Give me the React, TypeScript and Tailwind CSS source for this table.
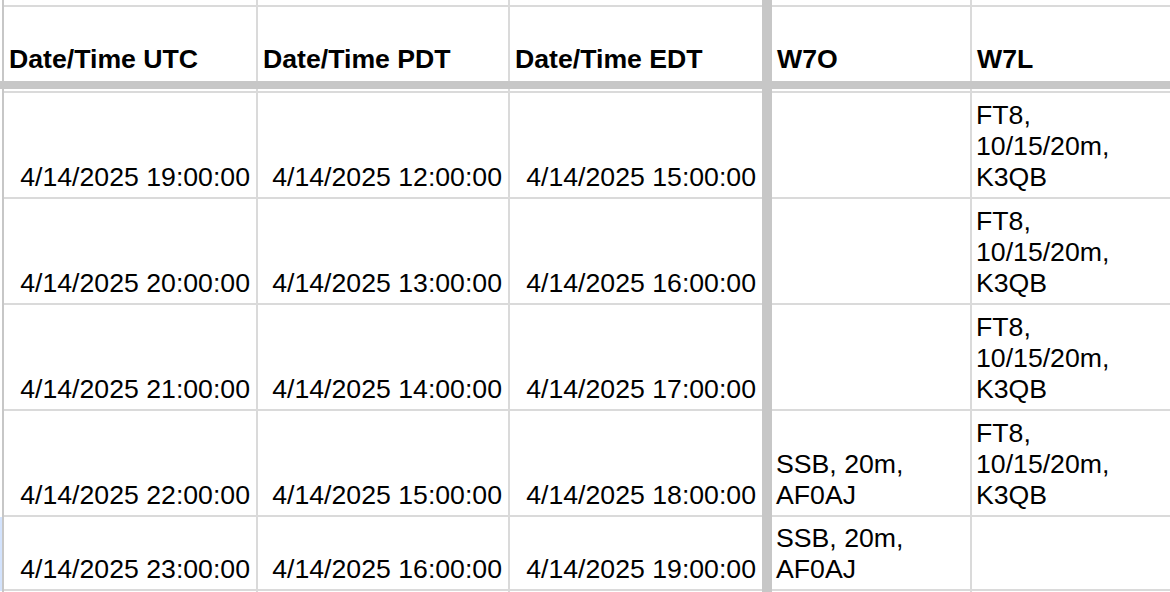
import React from "react";

type Row = {
  utc: string;
  pdt: string;
  edt: string;
  w7o: string[];
  w7l: string[];
};

const rows: Row[] = [
  { utc: "4/14/2025 19:00:00", pdt: "4/14/2025 12:00:00", edt: "4/14/2025 15:00:00", w7o: [], w7l: ["FT8,", "10/15/20m,", "K3QB"] },
  { utc: "4/14/2025 20:00:00", pdt: "4/14/2025 13:00:00", edt: "4/14/2025 16:00:00", w7o: [], w7l: ["FT8,", "10/15/20m,", "K3QB"] },
  { utc: "4/14/2025 21:00:00", pdt: "4/14/2025 14:00:00", edt: "4/14/2025 17:00:00", w7o: [], w7l: ["FT8,", "10/15/20m,", "K3QB"] },
  { utc: "4/14/2025 22:00:00", pdt: "4/14/2025 15:00:00", edt: "4/14/2025 18:00:00", w7o: ["SSB, 20m,", "AF0AJ"], w7l: ["FT8,", "10/15/20m,", "K3QB"] },
  { utc: "4/14/2025 23:00:00", pdt: "4/14/2025 16:00:00", edt: "4/14/2025 19:00:00", w7o: ["SSB, 20m,", "AF0AJ"], w7l: [] },
];

const line = "border-[#dadada]";

// one spreadsheet row: gutter, left rule, five cells, freeze bar after the third
function SheetRow({
  height,
  bottom = true,
  selected = false,
  cells,
}: {
  height: string;
  bottom?: boolean;
  selected?: boolean;
  cells?: React.ReactNode[];
}) {
  const b = bottom ? `border-b-2 ${line}` : "";
  const c = cells ?? [null, null, null, null, null];
  return (
    <div className={`flex shrink-0 ${height}`}>
      <div className={`w-[2px] shrink-0 ${selected ? "bg-[#d3e3fd]" : "bg-white"}`} />
      <div className="w-[2px] shrink-0 bg-[#c7c7c7]" />
      <div className={`w-[254px] shrink-0 border-r-2 ${line} ${b}`}>{c[0]}</div>
      <div className={`w-[252px] shrink-0 border-r-2 ${line} ${b}`}>{c[1]}</div>
      <div className={`w-[252px] shrink-0 ${b}`}>{c[2]}</div>
      <div className="w-[10px] shrink-0 bg-[#c7c7c7]" />
      <div className={`w-[200px] shrink-0 border-r-2 ${line} ${b}`}>{c[3]}</div>
      <div className={`flex-1 ${b}`}>{c[4]}</div>
    </div>
  );
}

function Head({ children }: { children: string }) {
  return (
    <div className="flex h-full items-end pl-[5px] pb-[6px] font-bold whitespace-nowrap">
      {children}
    </div>
  );
}

function Num({ children }: { children: string }) {
  return (
    <div className="flex h-full items-end justify-end pr-[6px] pb-[4px] whitespace-nowrap">
      {children}
    </div>
  );
}

function Text({ lines }: { lines: string[] }) {
  return (
    <div className="flex h-full flex-col justify-end pl-[4px] pb-[4px] whitespace-nowrap">
      {lines.map((l, i) => (
        <span key={i}>{l}</span>
      ))}
    </div>
  );
}

export default function App() {
  return (
    <div className="flex h-[592px] w-[1170px] flex-col overflow-hidden bg-white font-['Liberation_Sans',Arial,sans-serif] text-[26.67px] leading-[31px] text-black">
      <SheetRow height="h-[7px]" />
      <SheetRow
        height="h-[74px]"
        bottom={false}
        cells={[
          <Head key="a">Date/Time UTC</Head>,
          <Head key="b">Date/Time PDT</Head>,
          <Head key="c">Date/Time EDT</Head>,
          <Head key="d">W7O</Head>,
          <Head key="e">W7L</Head>,
        ]}
      />
      <div className="h-[8px] shrink-0 bg-[#c7c7c7]" />
      <SheetRow height="h-[4px]" />
      {rows.map((r, i) => (
        <SheetRow
          key={r.utc}
          height={i === rows.length - 1 ? "h-[74px]" : "h-[106px]"}
          selected={i === rows.length - 1}
          cells={[
            <Num key="a">{r.utc}</Num>,
            <Num key="b">{r.pdt}</Num>,
            <Num key="c">{r.edt}</Num>,
            <Text key="d" lines={r.w7o} />,
            <Text key="e" lines={r.w7l} />,
          ]}
        />
      ))}
      <div className="flex-1">
        <SheetRow height="h-full" bottom={false} />
      </div>
    </div>
  );
}
